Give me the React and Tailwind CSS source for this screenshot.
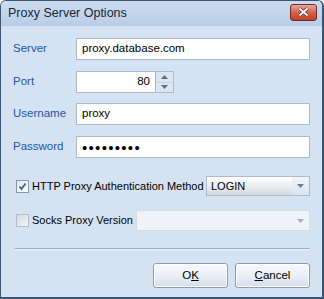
import React from "react";

const font = { fontFamily: '"Liberation Sans", Arial, sans-serif' };

const Arrow = ({ up = false, color = "#5d6e86" }) => (
  <svg width="7" height="4" viewBox="0 0 7 4">
    <path d={up ? "M0 4 L3.5 0 L7 4 Z" : "M0 0 L7 0 L3.5 4 Z"} fill={color} />
  </svg>
);

const Field = ({ children, className = "" }) => (
  <div
    className={`h-[22px] shrink-0 bg-white border border-[#abbacd] flex items-center px-[5px] text-[11.5px] text-black ${className}`}
  >
    {children}
  </div>
);

const Label = ({ children }) => (
  <div className="w-[63px] shrink-0 text-[11.5px] text-[#1d56a3]">{children}</div>
);

const Check = ({ checked }) => (
  <div
    className={`w-[13px] h-[13px] shrink-0 border flex items-center justify-center ${
      checked
        ? "border-[#8797ad] bg-gradient-to-br from-[#dfe6ef] to-[#ffffff]"
        : "border-[#b3bdca] bg-gradient-to-br from-[#d3d8df] to-[#f4f6f8]"
    }`}
  >
    {checked && (
      <svg width="9" height="9" viewBox="0 0 9 9">
        <path d="M1.5 4.5 L3.5 7 L7.5 1.5" stroke="#3a5f9e" strokeWidth="1.8" fill="none" />
      </svg>
    )}
  </div>
);

const Button = ({ children }) => (
  <button className="w-[75px] h-[25px] rounded-[3px] border border-[#8b9cb3] bg-gradient-to-b from-[#f7f9fc] via-[#eaf0f7] to-[#d2deec] text-[11.5px] text-black shadow-[inset_0_0_0_1px_#ffffff]">
    {children}
  </button>
);

export default function App() {
  return (
    <div className="w-[324px] h-[299px] bg-[#ffffff] flex flex-col" style={font}>
      <div className="w-[324px] h-[299px] border border-r-2 border-b-2 border-[#3d5572] rounded-t-[6px] bg-[#d4e2f2] flex flex-col overflow-hidden">
        {/* title bar */}
        <div className="h-[25px] flex items-center justify-between pl-[7px] pr-[5px] bg-gradient-to-b from-[#cbdcf0] to-[#b8cde6]">
          <span className="text-[12.5px] text-[#1b2533]">Proxy Server Options</span>
          <div className="w-[27px] h-[17px] mb-[3px] rounded-[3px] border border-[#6e2f26] bg-gradient-to-b from-[#e9a896] via-[#d3644e] to-[#c0402b] flex items-center justify-center">
            <svg width="11" height="10" viewBox="0 0 11 10">
              <path d="M1.5 1.5 L9.5 8.5 M9.5 1.5 L1.5 8.5" stroke="#5a2a22" strokeWidth="3.2" />
              <path d="M1.5 1.5 L9.5 8.5 M9.5 1.5 L1.5 8.5" stroke="#ffffff" strokeWidth="1.8" />
            </svg>
          </div>
        </div>

        {/* body */}
        <div className="flex-1 flex flex-col pl-[12px] pr-[12px] pt-[12px]">
          <div className="flex items-center">
            <Label>Server</Label>
            <Field className="w-[234px]">proxy.database.com</Field>
          </div>
          <div className="flex items-center mt-[11px]">
            <Label>Port</Label>
            <Field className="w-[80px] justify-end">80</Field>
            <div className="w-[18px] h-[22px] border border-l-0 border-[#abbacd] bg-[#dbe6f3] flex flex-col">
              <div className="flex-1 flex items-center justify-center border-b border-[#c5d2e2]">
                <Arrow up />
              </div>
              <div className="flex-1 flex items-center justify-center">
                <Arrow />
              </div>
            </div>
          </div>
          <div className="flex items-center mt-[10px]">
            <Label>Username</Label>
            <Field className="w-[234px]">proxy</Field>
          </div>
          <div className="flex items-center mt-[11px]">
            <Label>Password</Label>
            <Field className="w-[234px]">
              <span className="text-[15px] tracking-[1.3px] leading-none">•••••••••</span>
            </Field>
          </div>

          <div className="flex items-center mt-[18px] h-[20px] pl-[3px]">
            <Check checked />
            <span className="ml-[3px] text-[11px] text-black whitespace-nowrap">
              HTTP Proxy Authentication Method
            </span>
            <div className="ml-auto shrink-0 w-[104px] h-[20px] border border-[#aebbcc] flex">
              <div className="flex-1 flex items-center pl-[4px] text-[11px] text-black bg-gradient-to-b from-[#ffffff] via-[#eceef1] to-[#d4d8de]">
                LOGIN
              </div>
              <div className="w-[17px] flex items-center justify-center bg-gradient-to-b from-[#eef4fb] to-[#d8e5f4]">
                <Arrow color="#6b7c93" />
              </div>
            </div>
          </div>

          <div className="flex items-center mt-[14px] h-[21px] pl-[3px]">
            <Check />
            <span className="ml-[3px] text-[11px] text-black whitespace-nowrap">
              Socks Proxy Version
            </span>
            <div className="ml-auto shrink-0 w-[174px] h-[21px] border border-[#d3dbe5] bg-[#eff2f6] flex items-center justify-end pr-[5px]">
              <Arrow color="#a3acb8" />
            </div>
          </div>

          <div className="mt-[17px] border-t border-[#a6adb7] border-b border-b-[#eef3f9] ml-[2px]" />

          <div className="flex justify-end gap-[7px] mt-[13px]">
            <Button>
              O<span className="underline">K</span>
            </Button>
            <Button>
              <span className="underline">C</span>ancel
            </Button>
          </div>
        </div>
      </div>
    </div>
  );
}
